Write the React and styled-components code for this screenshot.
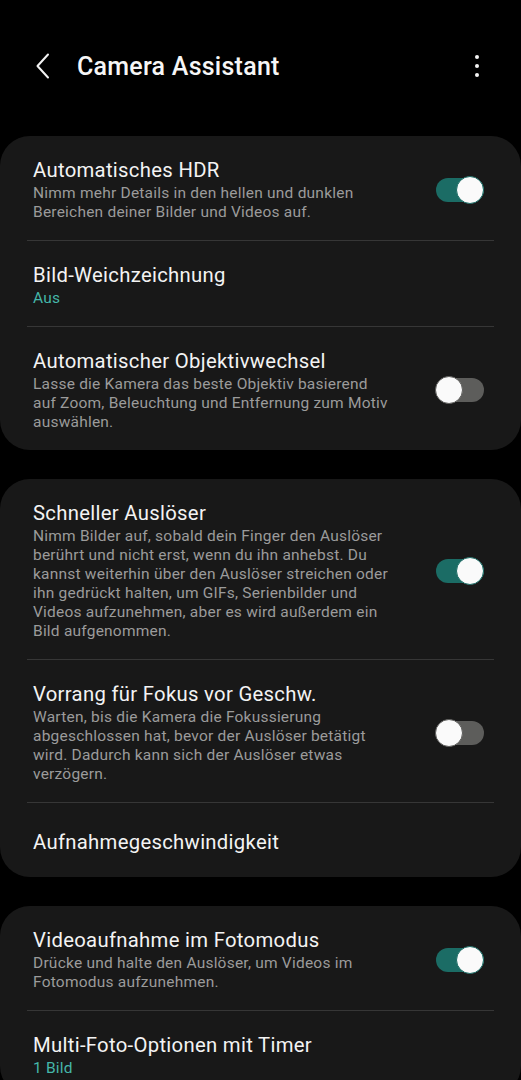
import React from "react";
import styled, { createGlobalStyle } from "styled-components";

const Global = createGlobalStyle`
  html, body {
    margin: 0;
    padding: 0;
    background: #000;
  }
  body {
    font-family: Roboto, "Noto Sans", "Liberation Sans", sans-serif;
    -webkit-font-smoothing: antialiased;
  }
`;

const Page = styled.div`
  width: 521px;
  background: #000;
  display: flex;
  flex-direction: column;
  gap: 29px;
`;

const Header = styled.header`
  height: 132px;
  margin-bottom: -25px;
  display: flex;
  align-items: center;
  padding: 0 0 0 33px;
  box-sizing: border-box;
`;

const BackButton = styled.button`
  width: 20px;
  height: 28px;
  padding: 0;
  margin: 0 24px 0 0;
  border: none;
  background: transparent;
  display: flex;
  align-items: center;
  justify-content: center;
  color: #f4f4f4;
`;

const Title = styled.h1`
  flex: 1;
  margin: 0;
  color: #f6f6f6;
  font-size: 25px;
  font-weight: 500;
  letter-spacing: 0.25px;
`;

const MenuButton = styled.button`
  width: 24px;
  height: 30px;
  margin-right: 32px;
  padding: 0;
  border: none;
  background: transparent;
  display: flex;
  flex-direction: column;
  align-items: center;
  justify-content: center;
  gap: 5px;
`;

const Dot = styled.span`
  width: 4px;
  height: 4px;
  border-radius: 50%;
  background: #f4f4f4;
`;

const Card = styled.section`
  background: #181818;
  border-radius: 30px;
  display: flex;
  flex-direction: column;
`;

const Row = styled.div`
  display: flex;
  align-items: center;
  min-height: 74px;
  padding: 21px 37px 18px 33px;
  box-sizing: border-box;
`;

const Divider = styled.div`
  height: 1px;
  background: #363636;
  margin: 0 27px;
`;

const TextCol = styled.div`
  flex: 1;
  min-width: 0;
  display: flex;
  flex-direction: column;
  padding-right: ${(p) => (p.$toggle ? "43px" : "0")};
`;

const ItemTitle = styled.div`
  color: #f3f3f3;
  font-size: 20.3px;
  line-height: 26px;
  letter-spacing: 0.3px;
`;

const ItemSub = styled.div`
  margin-top: 1px;
  color: #9b9b9b;
  font-size: 15.5px;
  line-height: 19px;
  letter-spacing: 0.22px;
`;

const ItemValue = styled(ItemSub)`
  color: #45b6a9;
`;

const Track = styled.div`
  position: relative;
  flex: none;
  width: 48px;
  height: 24px;
  border-radius: 12px;
  background: ${(p) => (p.$on ? "#1b6c65" : "#5d5d5b")};
`;

const Thumb = styled.div`
  position: absolute;
  top: -2px;
  ${(p) => (p.$on ? "right: 0;" : "left: -1px;")}
  width: 28px;
  height: 28px;
  border-radius: 50%;
  box-sizing: border-box;
  background: #fafafa;
  border: 1.5px solid ${(p) => (p.$on ? "#1b6c65" : "#5d5d5b")};
`;

const Toggle = ({ on }) => (
  <Track $on={on}>
    <Thumb $on={on} />
  </Track>
);

const Item = ({ title, sub, value, toggle }) => (
  <Row>
    <TextCol $toggle={toggle !== undefined}>
      <ItemTitle>{title}</ItemTitle>
      {sub && <ItemSub>{sub}</ItemSub>}
      {value && <ItemValue>{value}</ItemValue>}
    </TextCol>
    {toggle !== undefined && <Toggle on={toggle} />}
  </Row>
);

const sections = [
  [
    {
      title: "Automatisches HDR",
      sub: "Nimm mehr Details in den hellen und dunklen Bereichen deiner Bilder und Videos auf.",
      toggle: true,
    },
    { title: "Bild-Weichzeichnung", value: "Aus" },
    {
      title: "Automatischer Objektivwechsel",
      sub: "Lasse die Kamera das beste Objektiv basierend auf Zoom, Beleuchtung und Entfernung zum Motiv auswählen.",
      toggle: false,
    },
  ],
  [
    {
      title: "Schneller Auslöser",
      sub: "Nimm Bilder auf, sobald dein Finger den Auslöser berührt und nicht erst, wenn du ihn anhebst. Du kannst weiterhin über den Auslöser streichen oder ihn gedrückt halten, um GIFs, Serienbilder und Videos aufzunehmen, aber es wird außerdem ein Bild aufgenommen.",
      toggle: true,
    },
    {
      title: "Vorrang für Fokus vor Geschw.",
      sub: "Warten, bis die Kamera die Fokussierung abgeschlossen hat, bevor der Auslöser betätigt wird. Dadurch kann sich der Auslöser etwas verzögern.",
      toggle: false,
    },
    { title: "Aufnahmegeschwindigkeit" },
  ],
  [
    {
      title: "Videoaufnahme im Fotomodus",
      sub: "Drücke und halte den Auslöser, um Videos im Fotomodus aufzunehmen.",
      toggle: true,
    },
    { title: "Multi-Foto-Optionen mit Timer", value: "1 Bild" },
  ],
];

export default function App() {
  return (
    <>
      <Global />
      <Page>
        <Header>
          <BackButton aria-label="Zurück">
            <svg width="16" height="26" viewBox="0 0 16 26" fill="none">
              <path
                d="M13 1.5 L2.5 13 L13 24.5"
                stroke="#f2f2f2"
                strokeWidth="2"
                strokeLinecap="round"
                strokeLinejoin="round"
              />
            </svg>
          </BackButton>
          <Title>Camera Assistant</Title>
          <MenuButton aria-label="Mehr Optionen">
            <Dot />
            <Dot />
            <Dot />
          </MenuButton>
        </Header>
        {sections.map((items, si) => (
          <Card key={si}>
            {items.map((it, i) => (
              <React.Fragment key={i}>
                {i > 0 && <Divider />}
                <Item {...it} />
              </React.Fragment>
            ))}
          </Card>
        ))}
      </Page>
    </>
  );
}
